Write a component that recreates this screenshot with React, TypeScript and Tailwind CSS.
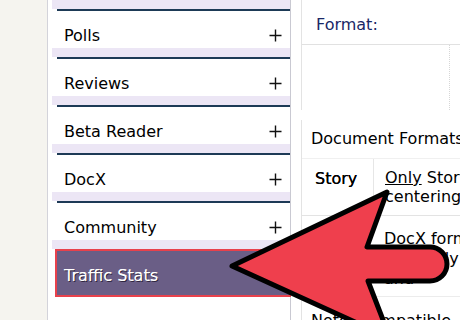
import React from "react";

const items = ["Polls", "Reviews", "Beta Reader", "DocX", "Community"];

function Band({ line = true }: { line?: boolean }) {
  return (
    <div className="flex flex-col">
      <div className="h-[9px] ml-[4px] bg-[#ece6f5]" />
      {line && <div className="h-[2px] ml-[9px] bg-[#1d3a56]" />}
    </div>
  );
}

function Plus() {
  return (
    <svg width="13" height="13" viewBox="0 0 13 13" className="shrink-0">
      <path d="M6.5 0.5 V12.5 M0.5 6.5 H12.5" stroke="#111" strokeWidth="1.4" />
    </svg>
  );
}

function MenuRow({ name }: { name: string }) {
  return (
    <div className="h-[37px] pt-[12px] pl-[16px] pr-[8px] flex items-center justify-between text-[16px] text-black">
      <span>{name}</span>
      <Plus />
    </div>
  );
}

function Arrow() {
  return (
    <svg className="absolute left-0 top-0 pointer-events-none" width="460" height="320" viewBox="0 0 460 320">
      <path
        d="M232 266 L387 192 L367 247 L430 247 A17 17 0 0 1 430 281 L368 281 L390 338 Z"
        fill="#ef3f4d"
        stroke="#000"
        strokeWidth="5"
        strokeLinejoin="round"
      />
    </svg>
  );
}

export default function App() {
  return (
    <div className="relative w-[460px] h-[320px] overflow-hidden flex bg-white font-['DejaVu_Sans',sans-serif]">
      {/* page gutter */}
      <div className="w-[48px] shrink-0 bg-[#f5f4ef] border-r border-[#d3d3da]" />

      {/* side menu */}
      <div className="w-[243px] shrink-0 bg-white border-r border-[#c9c9d2] flex flex-col">
        <Band />
        {items.map((name, i) => (
          <React.Fragment key={name}>
            <MenuRow name={name} />
            <Band line={i < items.length - 1} />
          </React.Fragment>
        ))}
        <div className="h-[48px] ml-[7px] -mr-[2px] border-2 border-[#e8414c] bg-[#6a5e86] flex items-center pl-[7px] pt-[6px]">
          <span className="text-white text-[16px] [text-shadow:1px_1px_0_#2e2640,0.5px_0_0_#fff]">Traffic Stats</span>
        </div>
      </div>

      {/* content */}
      <div className="flex-1 pl-[10px] bg-white text-[16px] text-black">
        <div className="border-l border-[#e3e3e3] h-[110px] flex flex-col">
          <div className="h-[45px] pt-[5px] pl-[14px] flex items-center border-b border-[#e1e1e1] text-[#1a2766]">
            Format:
          </div>
          <div className="flex-1 flex">
            <div className="w-[148px] border-r border-dotted border-[#d6d6d6]" />
          </div>
        </div>
        <div className="h-[10px]" />
        <div className="border-l border-[#e3e3e3] flex flex-col">
          <div className="h-[38px] pl-[9px] flex items-center whitespace-nowrap">
            Document Formats
          </div>
          <div className="h-[57px] flex border-t border-[#f0f0f0]">
            <div className="w-[71px] pl-[13px] pt-[8px] [text-shadow:0_0_0.5px_#000]">Story</div>
            <div className="flex-1 border-l border-[#e6e6e6] pl-[11px] pt-[9px] leading-[19px] whitespace-nowrap overflow-hidden">
              <div>
                <span className="underline">Only</span> Story formatting
              </div>
              <div>centering</div>
            </div>
          </div>
          <div className="h-[81px] flex border-t border-[#e3e3e3]">
            <div className="w-[71px]" />
            <div className="flex-1 pl-[11px] pt-[13px] leading-[20px] whitespace-nowrap overflow-hidden">
              <div>DocX format</div>
              <div>generally</div>
              <div>and</div>
            </div>
          </div>
          <div className="h-[30px] pl-[9px] pt-[12px] border-t border-[#ececec] whitespace-nowrap">
            Note: Compatible
          </div>
        </div>
      </div>

      <Arrow />
    </div>
  );
}
